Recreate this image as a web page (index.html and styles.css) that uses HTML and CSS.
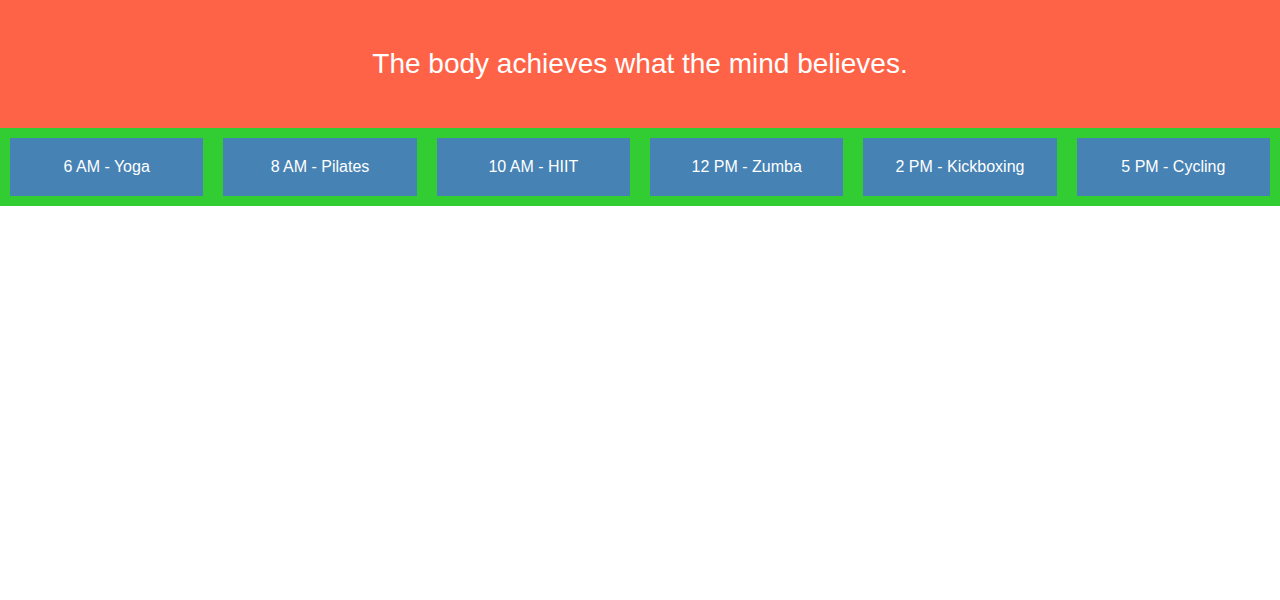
FILE: index.html
```html
<!DOCTYPE html>
<html>
<head>
<meta charset="utf-8">
<link rel="stylesheet" href="styles.css">
</head>
<body>
<header class="hero">
  <h1 class="quote">The body achieves what the mind believes.</h1>
</header>
<section class="schedule">
  <div class="slot">6 AM - Yoga</div>
  <div class="slot">8 AM - Pilates</div>
  <div class="slot">10 AM - HIIT</div>
  <div class="slot">12 PM - Zumba</div>
  <div class="slot">2 PM - Kickboxing</div>
  <div class="slot">5 PM - Cycling</div>
</section>
</body>
</html>
```
FILE: styles.css
```css
html, body {
  margin: 0;
  padding: 0;
  background: #ffffff;
  font-family: "Liberation Sans", Arial, sans-serif;
}
.hero {
  background: #ff6347;
  height: 128px;
  display: flex;
  align-items: center;
  justify-content: center;
}
.quote {
  margin: 0;
  color: #ffffff;
  font-size: 28px;
  font-weight: normal;
  line-height: 32px;
}
.schedule {
  background: #32cd32;
  padding: 10px;
  display: grid;
  grid-template-columns: repeat(6, 1fr);
  gap: 20px;
}
.slot {
  background: #4682b4;
  color: #ffffff;
  font-size: 16px;
  line-height: 18px;
  padding: 20px 0;
  text-align: center;
}
```
